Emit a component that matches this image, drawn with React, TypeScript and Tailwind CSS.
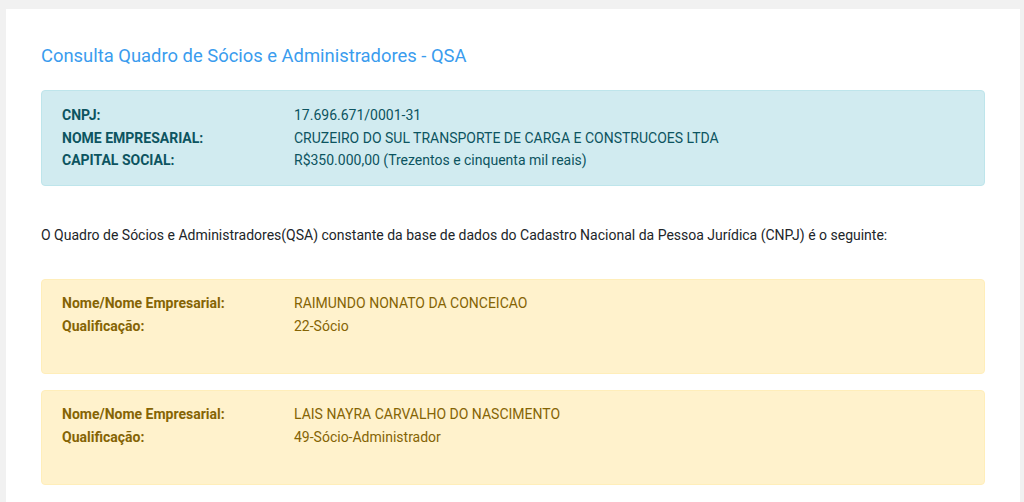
const empresa = [
  { label: "CNPJ:", value: "17.696.671/0001-31" },
  { label: "NOME EMPRESARIAL:", value: "CRUZEIRO DO SUL TRANSPORTE DE CARGA E CONSTRUCOES LTDA" },
  { label: "CAPITAL SOCIAL:", value: "R$350.000,00 (Trezentos e cinquenta mil reais)" },
];

const socios = [
  { nome: "RAIMUNDO NONATO DA CONCEICAO", qualificacao: "22-Sócio" },
  { nome: "LAIS NAYRA CARVALHO DO NASCIMENTO", qualificacao: "49-Sócio-Administrador" },
];

function Row({ label, value }: { label: string; value: string }) {
  return (
    <div className="flex">
      <div className="w-[232px] shrink-0 font-bold">{label}</div>
      <div>{value}</div>
    </div>
  );
}

export default function App() {
  return (
    <div className="min-h-[502px] bg-[#f1f1f1] pt-[9px] pl-[6px] pr-[4px] font-['Roboto',sans-serif] text-[14px] leading-[22.5px]">
      <div className="min-h-[493px] bg-white px-[35px] pt-[33px] pb-4">
        <h1 className="text-[18.4px] leading-[27px] text-[#3a9cee]">
          Consulta Quadro de Sócios e Administradores - QSA
        </h1>

        <div className="mt-[21px] rounded-[4px] border border-[#bee5eb] bg-[#d1ebf0] px-5 pt-[13px] pb-[13px] text-[#0c5460]">
          {empresa.map((r) => (
            <Row key={r.label} label={r.label} value={r.value} />
          ))}
        </div>

        <p className="mt-[38px] text-[#212529]">
          O Quadro de Sócios e Administradores(QSA) constante da base de dados do Cadastro Nacional da
          Pessoa Jurídica (CNPJ) é o seguinte:
        </p>

        <div className="mt-[33px] flex flex-col gap-4">
          {socios.map((s) => (
            <div
              key={s.nome}
              className="rounded-[4px] border border-[#ffeeba] bg-[#fff2cc] px-5 pt-3 pb-[36px] text-[#856404]"
            >
              <Row label="Nome/Nome Empresarial:" value={s.nome} />
              <Row label="Qualificação:" value={s.qualificacao} />
            </div>
          ))}
        </div>
      </div>
    </div>
  );
}
